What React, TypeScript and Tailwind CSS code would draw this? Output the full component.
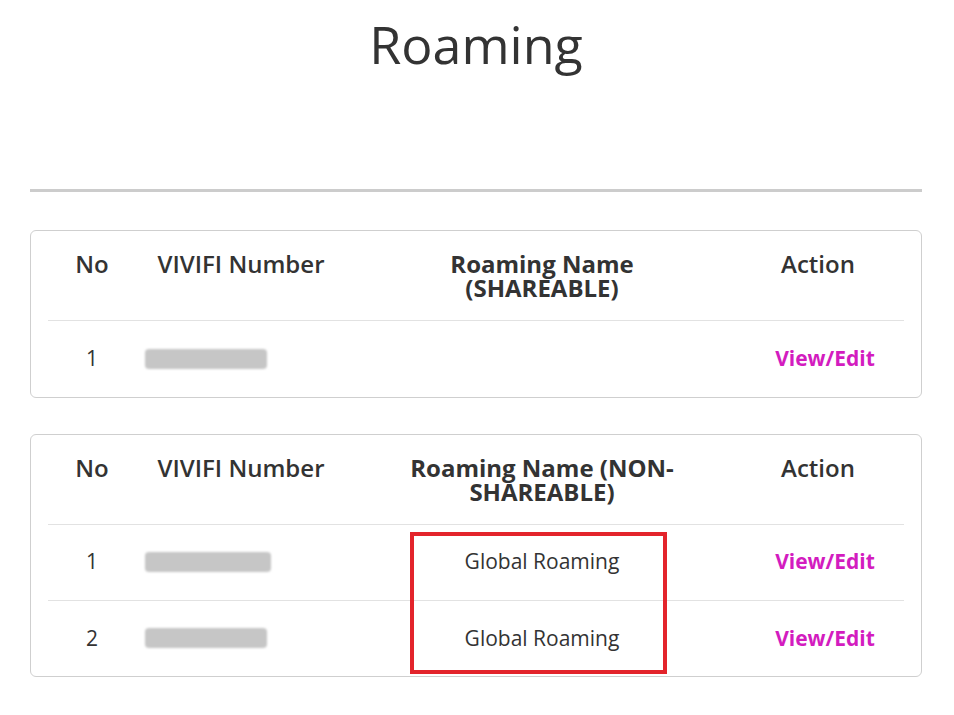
const font = { fontFamily: '"Open Sans", "Noto Sans", sans-serif' }

type Row = { no: number; name: string; blur: string }

const Blurred = ({ w }: { w: string }) => (
  <div className={`h-[20px] ${w} rounded-[4px] bg-[#c6c6c6] blur-[1px]`} />
)

const RoamingTable = ({
  title,
  rows,
  highlight,
}: {
  title: string
  rows: Row[]
  highlight?: boolean
}) => (
  <div className="relative rounded-[6px] border border-[#cfcfcf] bg-white px-[17px]">
    <table className="w-full table-fixed border-collapse text-[#333]">
      <colgroup>
        <col className="w-[88px]" />
        <col className="w-[210px]" />
        <col className="w-[392px]" />
        <col />
      </colgroup>
      <thead>
        <tr className="border-b border-[#e2e2e2] align-top text-[24px] leading-[24px]">
          <th className="pt-[21px] pb-[20px] font-semibold">No</th>
          <th className="pt-[21px] pb-[20px] font-semibold">VIVIFI Number</th>
          <th className="pt-[21px] pb-[20px] font-bold">
            <div className="mx-auto w-[300px]">{title}</div>
          </th>
          <th className="pt-[21px] pb-[20px] pr-[6px] font-semibold">Action</th>
        </tr>
      </thead>
      <tbody>
        {rows.map((r, i) => (
          <tr
            key={r.no}
            className={`h-[76px] text-[21px] ${i < rows.length - 1 ? 'border-b border-[#e2e2e2]' : ''}`}
          >
            <td className="text-center">{r.no}</td>
            <td className="pl-[9px]">
              <Blurred w={r.blur} />
            </td>
            <td className="text-center">{r.name}</td>
            <td className="pl-[8px] text-center">
              <span className="cursor-pointer font-bold text-[#d31cbf]">
                View/Edit
              </span>
            </td>
          </tr>
        ))}
      </tbody>
    </table>
    {highlight && (
      <div className="pointer-events-none absolute top-[97px] left-[379px] h-[142px] w-[257px] border-4 border-[#e3242b]" />
    )}
  </div>
)

const App = () => {
  return (
    <div className="min-h-screen bg-white pr-[32px] pl-[30px] pb-10" style={font}>
      <h1 className="pt-[9px] text-center text-[52px] leading-[70px] font-normal text-[#333]">
        Roaming
      </h1>
      <div className="mt-[110px] h-[3px] bg-[#cccccc]" />
      <div className="mt-[38px] flex flex-col gap-[36px]">
        <RoamingTable
          title="Roaming Name (SHAREABLE)"
          rows={[{ no: 1, name: '', blur: 'w-[122px]' }]}
        />
        <RoamingTable
          title="Roaming Name (NON-SHAREABLE)"
          highlight
          rows={[
            { no: 1, name: 'Global Roaming', blur: 'w-[126px]' },
            { no: 2, name: 'Global Roaming', blur: 'w-[122px]' },
          ]}
        />
      </div>
    </div>
  )
}

export default App
